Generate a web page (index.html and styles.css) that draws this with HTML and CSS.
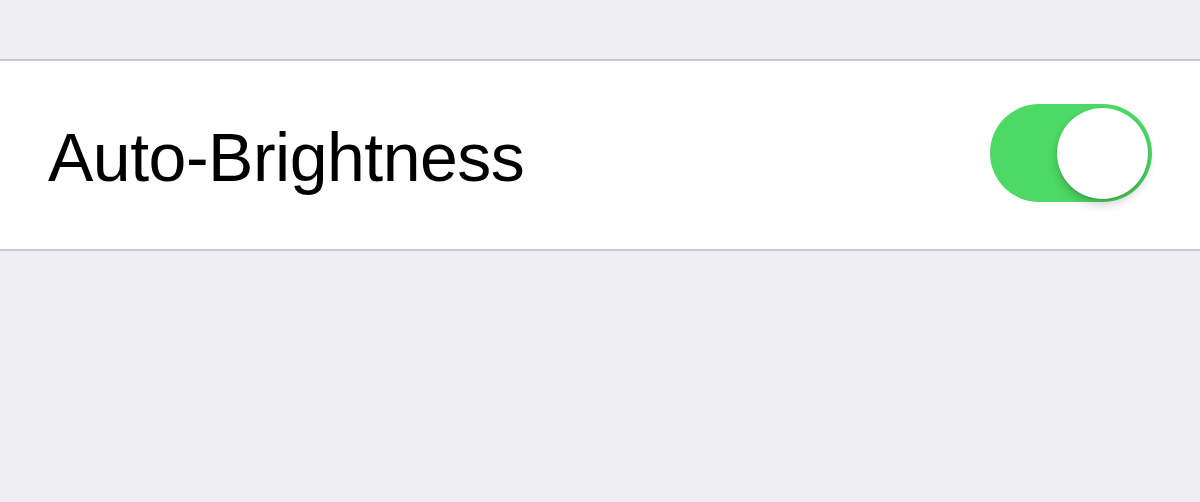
FILE: index.html
```html
<!DOCTYPE html>
<html lang="en">
<head>
  <meta charset="UTF-8" />
  <meta name="viewport" content="width=device-width, initial-scale=1.0"/>
  <title>Display Settings</title>
  <link rel="stylesheet" href="styles.css">
</head>
<body>

<!-- Settings group -->
<div class="settings-group">
  <div class="settings-row">
    <span class="row-label">Auto-Brightness</span>
    <div class="switch is-on">
      <div class="switch-knob"></div>
    </div>
  </div>
</div>

</body>
</html>
```

FILE: styles.css
```css
body {
  margin: 0;
  background: #efeff4;
  font-family: "Liberation Sans", Arial, sans-serif;
  height: 502px;
  overflow: hidden;
}

.settings-group {
  margin-top: 59px;
  background: #fff;
  border-top: 2px solid #c8c7cc;
  border-bottom: 2px solid #c8c7cc;
}

.settings-row {
  display: flex;
  align-items: center;
  justify-content: space-between;
  height: 188px;
  padding: 0 48px 0 48px;
}

.row-label {
  font-size: 68px;
  letter-spacing: -0.5px;
  color: #000;
  padding-top: 4px;
}

.switch {
  width: 162px;
  height: 98px;
  border-radius: 49px;
  background: #4cd964;
  display: flex;
  align-items: center;
  justify-content: flex-end;
  padding: 0 4px;
  box-sizing: border-box;
  margin-top: -4px;
}

.switch-knob {
  width: 91px;
  height: 91px;
  border-radius: 50%;
  background: #fff;
  box-shadow: 0 6px 10px rgba(0, 0, 0, 0.18), 0 1px 2px rgba(0, 0, 0, 0.15);
}
```
